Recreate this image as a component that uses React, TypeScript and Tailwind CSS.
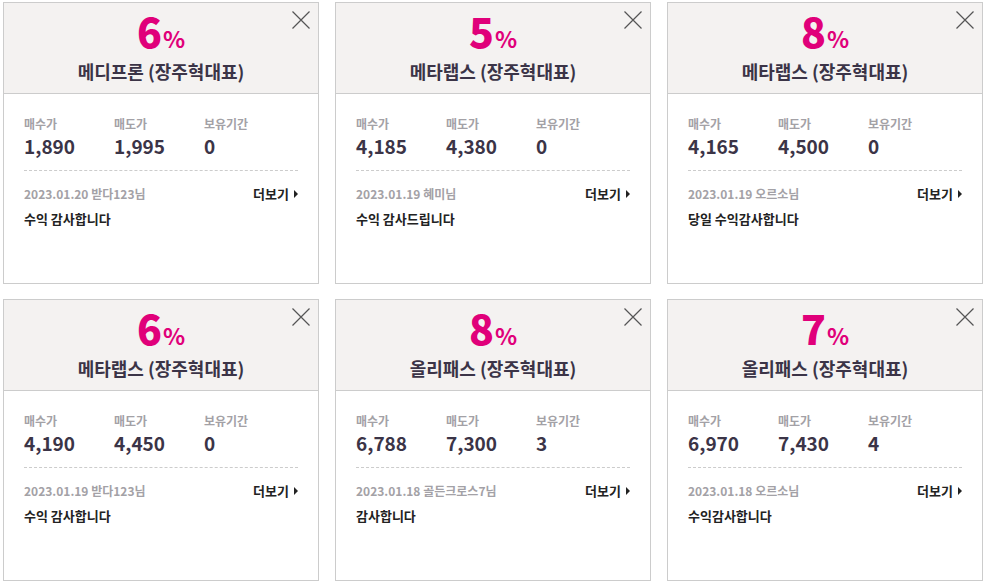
import React from "react";

type Review = {
  pct: string;
  name: string;
  buy: string;
  sell: string;
  hold: string;
  date: string;
  user: string;
  text: string;
};

const reviews: Review[] = [
  { pct: "6", name: "메디프론 (장주혁대표)", buy: "1,890", sell: "1,995", hold: "0", date: "2023.01.20", user: "받다123님", text: "수익 감사합니다" },
  { pct: "5", name: "메타랩스 (장주혁대표)", buy: "4,185", sell: "4,380", hold: "0", date: "2023.01.19", user: "혜미님", text: "수익 감사드립니다" },
  { pct: "8", name: "메타랩스 (장주혁대표)", buy: "4,165", sell: "4,500", hold: "0", date: "2023.01.19", user: "오르소님", text: "당일 수익감사합니다" },
  { pct: "6", name: "메타랩스 (장주혁대표)", buy: "4,190", sell: "4,450", hold: "0", date: "2023.01.19", user: "받다123님", text: "수익 감사합니다" },
  { pct: "8", name: "올리패스 (장주혁대표)", buy: "6,788", sell: "7,300", hold: "3", date: "2023.01.18", user: "골든크로스7님", text: "감사합니다" },
  { pct: "7", name: "올리패스 (장주혁대표)", buy: "6,970", sell: "7,430", hold: "4", date: "2023.01.18", user: "오르소님", text: "수익감사합니다" },
];

function CloseIcon() {
  return (
    <svg viewBox="0 0 18 18" className="absolute right-[8px] top-[8px] h-[18px] w-[18px]">
      <path d="M0.5 0.5L17.5 17.5M17.5 0.5L0.5 17.5" stroke="#555" strokeWidth="1.2" fill="none" />
    </svg>
  );
}

function ReviewCard({ r }: { r: Review }) {
  return (
    <div className="relative flex h-[282px] w-[316px] flex-col border border-[#cccccc] bg-white">
      {/* header */}
      <div className="flex h-[91px] flex-col items-center border-b border-[#cccccc] bg-[#f4f2f1] pt-[6px]">
        <CloseIcon />
        <div className="flex items-baseline text-[#e0007a]">
          <span className="text-[41px] font-extrabold leading-[42px]">{r.pct}</span>
          <span className="ml-[1px] text-[23px] font-bold leading-[42px]">%</span>
        </div>
        <div className="text-[18px] font-bold leading-[24px] text-[#3b3447]">{r.name}</div>
      </div>

      {/* body */}
      <div className="px-[20px] pt-[22px]">
        <div className="grid grid-cols-[90px_90px_1fr]">
          <div className="text-[12px] font-bold leading-[16px] text-[#a3a1a6]">매수가</div>
          <div className="text-[12px] font-bold leading-[16px] text-[#a3a1a6]">매도가</div>
          <div className="text-[12px] font-bold leading-[16px] text-[#a3a1a6]">보유기간</div>
          <div className="mt-[2px] text-[19px] font-bold leading-[24px] text-[#3b3447]">{r.buy}</div>
          <div className="mt-[2px] text-[19px] font-bold leading-[24px] text-[#3b3447]">{r.sell}</div>
          <div className="mt-[2px] text-[19px] font-bold leading-[24px] text-[#3b3447]">{r.hold}</div>
        </div>
        <div className="mt-[12px] border-t border-dashed border-[#cccccc]" />
        <div className="mt-[15px] flex items-center justify-between">
          <span className="text-[12px] font-bold leading-[16px] text-[#a3a1a6]">
            {r.date} {r.user}
          </span>
          <span className="flex items-center text-[13px] font-bold leading-[16px] text-[#222]">
            더보기
            <svg viewBox="0 0 4 8" className="ml-[5px] h-[8px] w-[4px]">
              <path d="M0 0L4 4L0 8Z" fill="#222" />
            </svg>
          </span>
        </div>
        <div className="mt-[8px] text-[13px] font-bold leading-[17px] text-[#222]">{r.text}</div>
      </div>
    </div>
  );
}

export default function App() {
  return (
    <div
      className="min-h-[583px] w-[985px] bg-white pl-[3px] pt-[2px]"
      style={{ fontFamily: '"Noto Sans CJK KR", "Noto Sans", sans-serif' }}
    >
      <div className="grid grid-cols-[316px_316px_316px] gap-x-[16px] gap-y-[15px]">
        {reviews.map((r, i) => (
          <ReviewCard key={i} r={r} />
        ))}
      </div>
    </div>
  );
}
